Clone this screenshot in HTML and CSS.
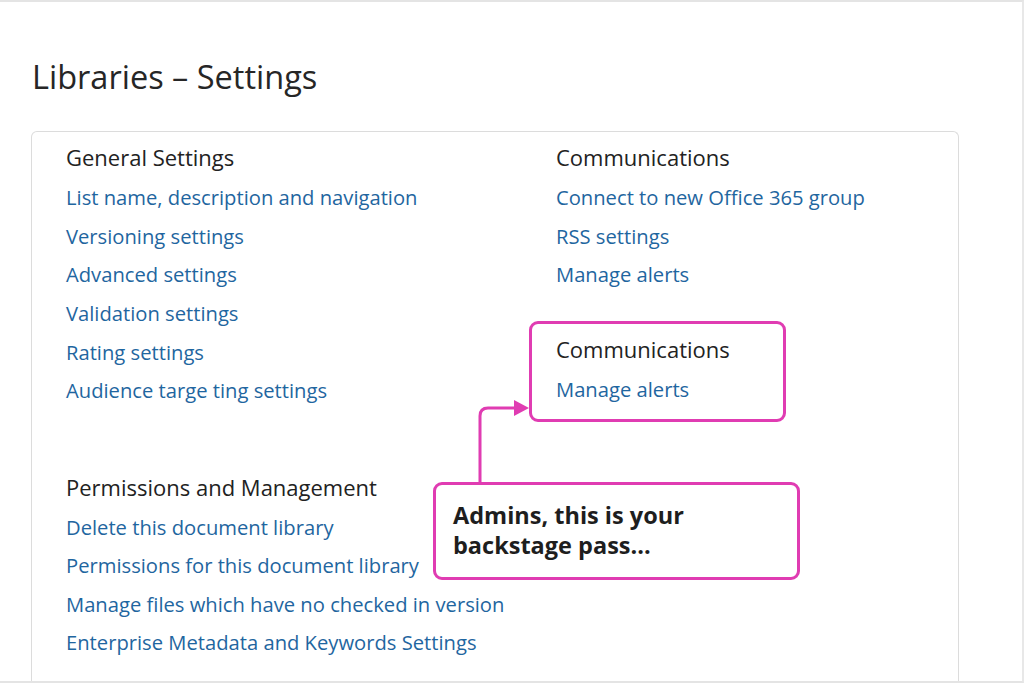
FILE: index.html
```html
<!DOCTYPE html>
<html lang="en">
<head>
<meta charset="utf-8">
<title>Libraries – Settings</title>
<link rel="stylesheet" href="styles.css">
</head>
<body>
<div class="page">
  <h1 class="title">Libraries – Settings</h1>
  <div class="card">
    <div class="col col-left">
      <section class="group">
        <h2 class="group-title">General Settings</h2>
        <a class="link" href="#">List name, description and navigation</a>
        <a class="link" href="#">Versioning settings</a>
        <a class="link" href="#">Advanced settings</a>
        <a class="link" href="#">Validation settings</a>
        <a class="link" href="#">Rating settings</a>
        <a class="link" href="#">Audience targe ting settings</a>
      </section>
      <section class="group group-perm">
        <h2 class="group-title">Permissions and Management</h2>
        <a class="link" href="#">Delete this document library</a>
        <a class="link" href="#">Permissions for this document library</a>
        <a class="link" href="#">Manage files which have no checked in version</a>
        <a class="link" href="#">Enterprise Metadata and Keywords Settings</a>
      </section>
    </div>
    <div class="col col-right">
      <section class="group">
        <h2 class="group-title">Communications</h2>
        <a class="link" href="#">Connect to new Office 365 group</a>
        <a class="link" href="#">RSS settings</a>
        <a class="link" href="#">Manage alerts</a>
      </section>
      <section class="group highlight">
        <h2 class="group-title">Communications</h2>
        <a class="link" href="#">Manage alerts</a>
      </section>
    </div>
    <svg class="arrow" width="60" height="100" viewBox="0 0 60 100" aria-hidden="true">
      <path d="M8 97 V26 Q8 18 16 18 H44" fill="none" stroke="#e03cb2" stroke-width="3"/>
      <path d="M42 10 L57 18 L42 26 Z" fill="#e03cb2"/>
    </svg>
    <div class="callout">Admins, this is your<br>backstage pass...</div>
  </div>
</div>
</body>
</html>
```
FILE: styles.css
```css
* { box-sizing: border-box; }
html, body { margin: 0; padding: 0; background: #fff; }
body {
  font-family: "Open Sans", "Noto Sans", "Liberation Sans", sans-serif;
  color: #222;
}
.page {
  width: 1024px;
  height: 683px;
  border-top: 2px solid #e4e4e4;
  border-right: 2px solid #e8e8e8;
  border-bottom: 2px solid #e4e4e4;
  padding: 0 0 0 31px;
  overflow: hidden;
}
.title {
  margin: 0;
  padding: 55px 0 0 1px;
  height: 129px;
  font-size: 32.5px;
  font-weight: 400;
  line-height: 40px;
  color: #262626;
}
.card {
  position: relative;
  width: 928px;
  height: 560px;
  border: 1px solid #dcdcdc;
  border-bottom: none;
  border-radius: 6px 6px 0 0;
  padding: 7px 0 0 34px;
  display: grid;
  grid-template-columns: 490px 1fr;
}
.col { display: flex; flex-direction: column; }
.group { display: flex; flex-direction: column; }
.group-title {
  margin: 0;
  font-size: 22px;
  font-weight: 400;
  line-height: 36.8px;
  padding-bottom: 2px;
  color: #222;
}
.link {
  font-size: 20.2px;
  line-height: 38.7px;
  color: #1f66a0;
  text-decoration: none;
  white-space: nowrap;
}
.group-perm { margin-top: 59px; }
.group-perm .link { line-height: 38.4px; }
.highlight {
  margin-top: 27px;
  margin-left: -27px;
  width: 257px;
  border: 3px solid #e03cb2;
  border-radius: 9px;
  padding: 7px 0 11px 24px;
}
.arrow {
  position: absolute;
  left: 440px;
  top: 258px;
}
.callout {
  position: absolute;
  left: 401px;
  top: 350px;
  width: 367px;
  height: 98px;
  border: 3px solid #e03cb2;
  border-radius: 9px;
  background: #fff;
  padding: 15px 0 0 17px;
  font-size: 23.5px;
  font-weight: 700;
  line-height: 30px;
  color: #1e1e1e;
}
```
